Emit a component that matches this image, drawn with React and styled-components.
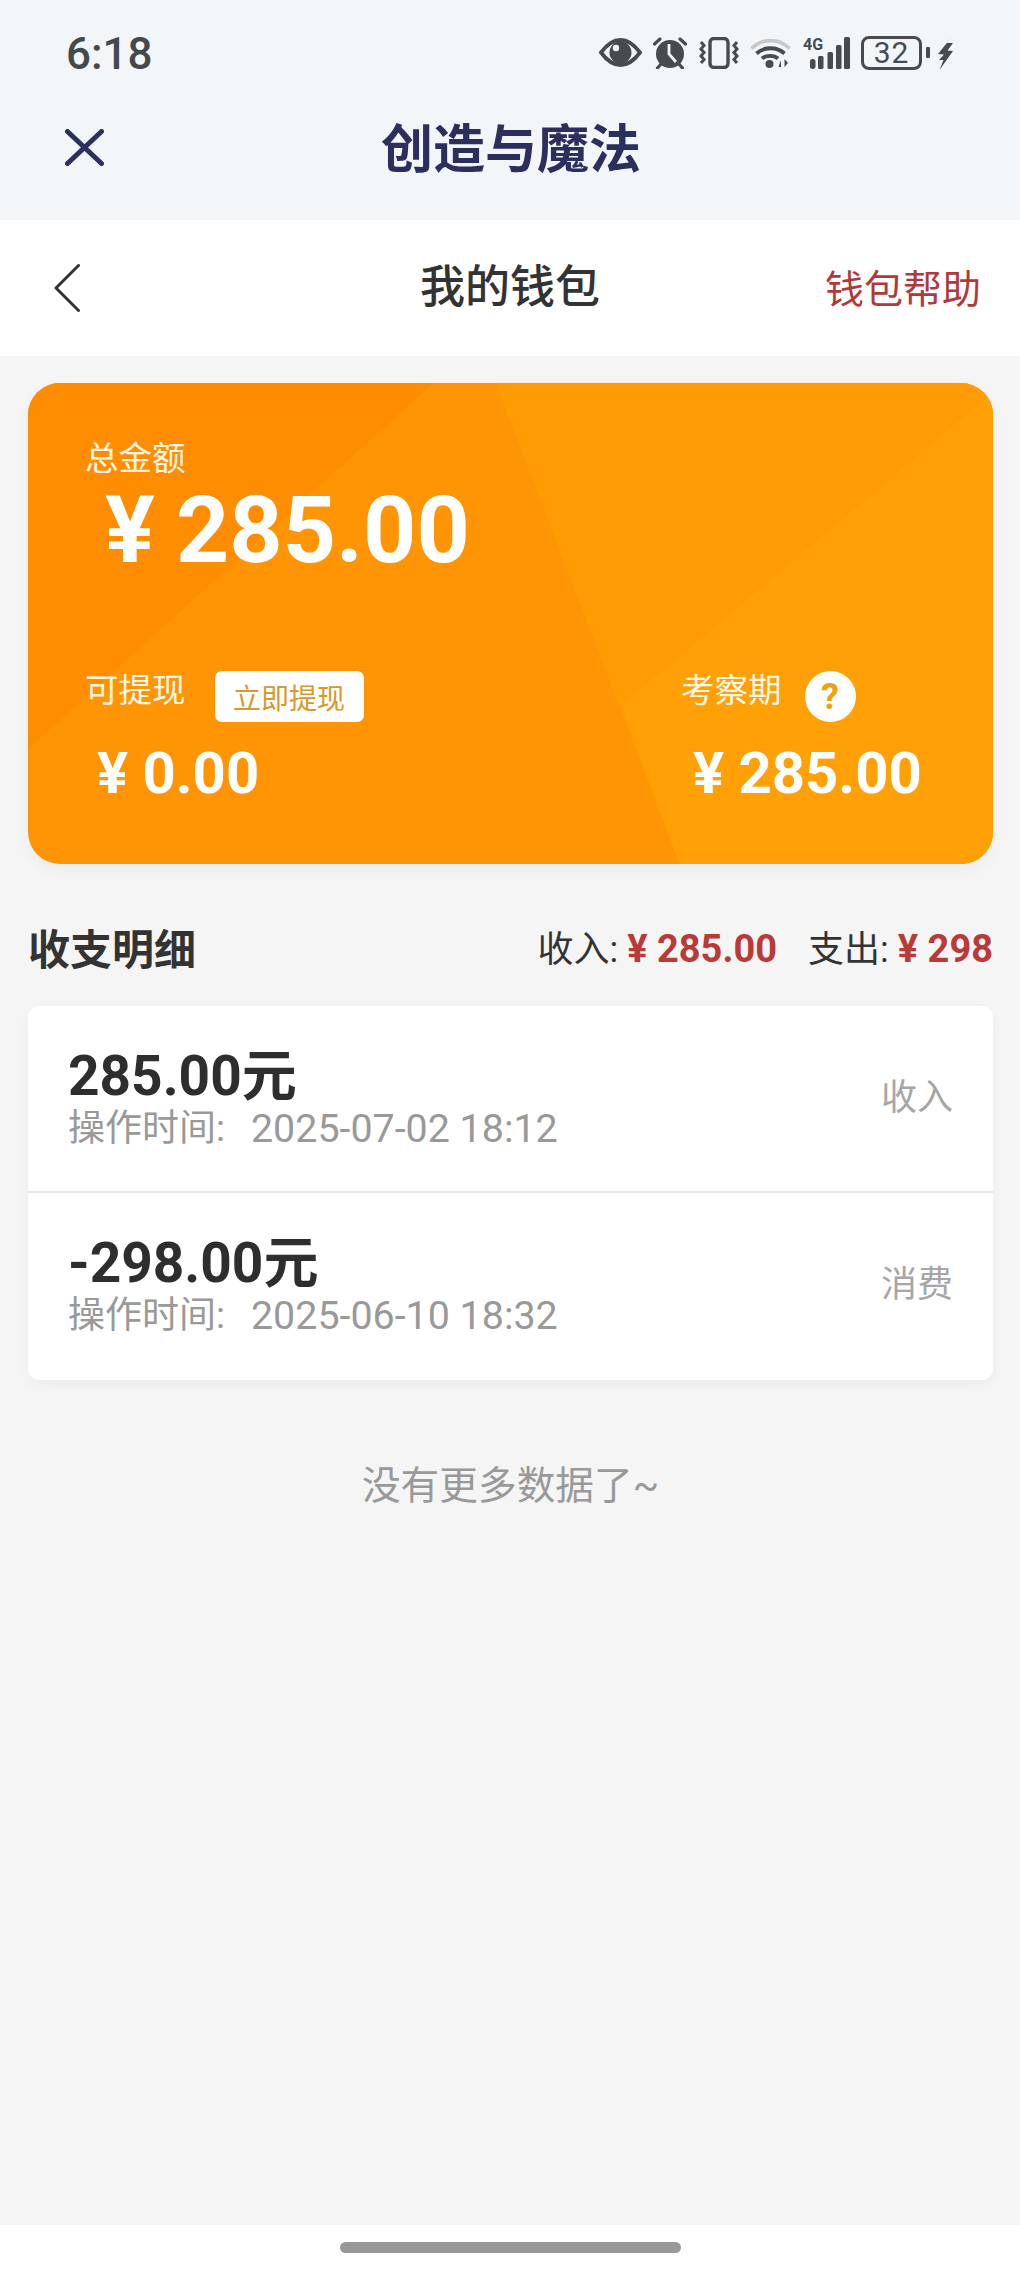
import React from 'react';
import styled, { createGlobalStyle } from 'styled-components';

const GlobalStyle = createGlobalStyle`
  html, body {
    margin: 0;
    padding: 0;
    background: #f5f5f5;
  }
  * {
    box-sizing: border-box;
  }
`;

const ICON = '#474b4e';

const Page = styled.div`
  width: 1020px;
  height: 2270px;
  display: flex;
  flex-direction: column;
  background: #f5f5f5;
  font-family: Roboto, 'Noto Sans CJK SC', sans-serif;
  overflow: hidden;
`;

const TopBar = styled.header`
  height: 220px;
  background: #f2f6f9;
  display: flex;
  flex-direction: column;
`;

const StatusBar = styled.div`
  height: 106px;
  padding: 2px 67px 0 66px;
  display: flex;
  align-items: center;
  justify-content: space-between;
`;

const Clock = styled.span`
  font-size: 44px;
  font-weight: 500;
  color: #46494c;
`;

const StatusIcons = styled.div`
  display: flex;
  align-items: center;
  gap: 11.5px;
  margin-top: -3px;
`;

const Battery = styled.div`
  width: 61px;
  height: 34px;
  border: 3px solid ${ICON};
  border-radius: 8px;
  display: flex;
  align-items: center;
  justify-content: center;
  font-size: 30px;
  line-height: 1;
  color: ${ICON};
  letter-spacing: 1px;
`;

const BatteryNub = styled.div`
  width: 4px;
  height: 11px;
  margin-left: -7.5px;
  margin-right: -3.5px;
  border-radius: 1px;
  background: ${ICON};
`;

const AppBar = styled.div`
  display: grid;
  grid-template-columns: 1fr auto 1fr;
  align-items: center;
  padding: 0 65px;
  height: 82px;
`;

const AppTitle = styled.h1`
  margin: 0 0 0 2px;
  padding-top: 8px;
  font-size: 52px;
  line-height: 60px;
  font-weight: 700;
  color: #2a2f5e;
`;

const NavBar = styled.nav`
  height: 136px;
  background: #fff;
  display: grid;
  grid-template-columns: 1fr auto 1fr;
  align-items: center;
  padding: 0 39px;
`;

const BackLink = styled.a`
  display: flex;
  margin-left: 15px;
`;

const NavTitle = styled.h2`
  margin: 0;
  font-size: 45px;
  line-height: 56px;
  font-weight: 500;
  color: #333;
`;

const HelpLink = styled.a`
  justify-self: end;
  margin-bottom: 4px;
  font-size: 39px;
  color: #b0393b;
`;

const Content = styled.main`
  flex: 1;
  padding: 27px 27px 0 28px;
  display: flex;
  flex-direction: column;
`;

const WalletCard = styled.section`
  position: relative;
  height: 481px;
  padding: 56px 57px 0;
  border-radius: 32px;
  overflow: hidden;
  background: #ff9405;
  color: #fff;
  box-shadow: 0 6px 16px rgba(0, 0, 0, 0.04);
`;

const Facet = styled.div`
  position: absolute;
  inset: 0;
  background: ${(p) => p.$color};
  clip-path: polygon(${(p) => p.$points});
`;

const CardBody = styled.div`
  position: relative;
  display: flex;
  flex-direction: column;
`;

const CardLabel = styled.span`
  font-size: 33.5px;
  line-height: 40px;
  color: #fff6e6;
`;

const TotalAmount = styled.div`
  margin: 2px 0 0 20px;
  font-size: 93px;
  line-height: 100px;
  font-weight: 700;
  word-spacing: -2px;
`;

const SplitRow = styled.div`
  margin-top: 90px;
  display: flex;
  justify-content: space-between;
`;

const SplitCol = styled.div`
  display: flex;
  flex-direction: column;
  width: ${(p) => p.$width};
`;

const SplitHead = styled.div`
  display: flex;
  align-items: flex-start;
  height: 51px;
`;

const WithdrawButton = styled.button`
  width: 149px;
  height: 51px;
  margin-left: 29px;
  padding: 0;
  border: none;
  border-radius: 7px;
  background: #fff;
  color: #d9982c;
  font-family: inherit;
  font-size: 28px;
`;

const HelpBadge = styled.span`
  width: 51px;
  height: 51px;
  margin-left: 23px;
  border-radius: 50%;
  background: #fff;
  color: #f3a010;
  display: flex;
  align-items: center;
  justify-content: center;
  font-size: 36px;
  font-weight: 700;
`;

const SplitAmount = styled.div`
  margin: 17px 0 0 ${(p) => p.$indent}px;
  font-size: 58px;
  line-height: 68px;
  font-weight: 700;
`;

const SummaryRow = styled.div`
  margin-top: 59px;
  height: 46px;
  display: flex;
  align-items: center;
  justify-content: space-between;
`;

const SectionTitle = styled.h3`
  margin: 0;
  font-size: 42px;
  font-weight: 700;
  color: #333;
`;

const Totals = styled.div`
  display: flex;
  align-items: center;
  gap: 31px;
`;

const TotalItem = styled.span`
  font-size: 36px;
  color: #333;
`;

const TotalValue = styled.b`
  margin-left: 9px;
  font-size: 38px;
  font-weight: 700;
  color: #b93a36;
`;

const ListCard = styled.section`
  margin-top: 37px;
  background: #fff;
  border-radius: 11px;
  box-shadow: 0 5px 12px rgba(0, 0, 0, 0.04);
`;

const Row = styled.div`
  height: 187px;
  padding: 40px 40px 0 40px;
  display: flex;
  justify-content: space-between;
  border-bottom: ${(p) => (p.$divider ? '2px solid #e6e6e6' : 'none')};
`;

const RowMain = styled.div`
  display: flex;
  flex-direction: column;
`;

const RowAmount = styled.div`
  font-size: 55px;
  line-height: 60px;
  font-weight: 700;
  color: #2e2e2e;
`;

const RowTime = styled.div`
  margin-top: 3px;
  display: flex;
  font-size: 37px;
  line-height: 40px;
  color: #999;
`;

const RowTimeValue = styled.span`
  margin-left: 26px;
  font-size: 39.4px;
`;

const RowKind = styled.span`
  margin-top: 29px;
  font-size: 36px;
  line-height: 46px;
  color: #a6a6a6;
`;

const EndNote = styled.p`
  margin: 81px 0 0;
  text-align: center;
  font-size: 38.7px;
  line-height: 50px;
  color: #999;
`;

const HomeBar = styled.footer`
  height: 45px;
  background: #fff;
  display: flex;
  justify-content: center;
  padding-top: 17px;
`;

const HomePill = styled.div`
  width: 341px;
  height: 11px;
  border-radius: 6px;
  background: #989898;
`;

const EyeIcon = () => (
  <svg width="43" height="29" viewBox="0 0 43 29" fill="none">
    <path
      d="M2 14.5C9 5 15 2 21.5 2S34 5 41 14.5C34 24 28 27 21.5 27S9 24 2 14.5Z"
      stroke={ICON}
      strokeWidth="3.8"
    />
    <circle cx="21.5" cy="14.5" r="11" fill={ICON} />
    <circle cx="17" cy="10" r="3.2" fill="#f2f6f9" />
  </svg>
);

const AlarmIcon = () => (
  <svg width="34" height="32" viewBox="0 0 34 32" fill="none">
    <circle cx="17" cy="17" r="14" fill={ICON} />
    <path d="M16 7V17L23 25" stroke="#f2f6f9" strokeWidth="2.8" />
    <path
      d="M1.5 7L7 2M32.5 7L27 2M4.5 31L9 26M29.5 31L25 26"
      stroke={ICON}
      strokeWidth="3.2"
      strokeLinecap="round"
    />
  </svg>
);

const VibrateIcon = () => (
  <svg width="40" height="32" viewBox="0 0 40 32" fill="none">
    <rect x="11" y="1.5" width="18" height="29" rx="4" stroke={ICON} strokeWidth="3.4" />
    <path
      d="M2 5L5 8.5L2 12L5 15.5L2 19L5 22.5L2 26M38 5L35 8.5L38 12L35 15.5L38 19L35 22.5L38 26"
      stroke={ICON}
      strokeWidth="3"
    />
  </svg>
);

const WifiIcon = () => (
  <svg width="41" height="31" viewBox="0 0 41 31" fill="none">
    <path d="M1.5 11.5C12 1 29 1 39.5 11.5" stroke="#c6c8ca" strokeWidth="3.6" />
    <path d="M6.5 16.5C14 9.5 27 9.5 34.5 16.5" stroke={ICON} strokeWidth="3.8" />
    <path d="M12 21.5C16 18 24 18 28 21.5" stroke={ICON} strokeWidth="3.8" />
    <circle cx="19.5" cy="27" r="4" fill={ICON} />
    <path d="M31 23V30H28.5ZM34.5 22V30L38 26Z" fill={ICON} />
  </svg>
);

const SignalIcon = () => (
  <svg width="47" height="34" viewBox="0 0 47 34">
    <text x="0" y="14" fontSize="16" fontWeight="700" fontFamily="Roboto, sans-serif" fill={ICON}>
      4G
    </text>
    <rect x="7" y="23" width="5.5" height="10" rx="2.7" fill={ICON} />
    <rect x="15" y="20" width="5.5" height="13" rx="1.5" fill={ICON} />
    <rect x="24.5" y="16" width="5.5" height="17" rx="1.5" fill={ICON} />
    <rect x="33" y="9" width="5.5" height="24" rx="1.5" fill={ICON} />
    <rect x="41" y="1" width="6" height="32" rx="1.5" fill={ICON} />
  </svg>
);

const BoltIcon = () => (
  <svg width="15" height="34" viewBox="0 0 15 34">
    <path d="M14.5 0L0 18L6 18.5L1 24L5.5 24L1.5 34L15 15L9.5 14.5L15 7L9 7Z" fill={ICON} />
  </svg>
);

const CloseIcon = () => (
  <svg width="39" height="37" viewBox="0 0 39 37" fill="none">
    <path d="M2.5 2.5L36.5 34.5M36.5 2.5L2.5 34.5" stroke="#2b3060" strokeWidth="5" strokeLinecap="round" />
  </svg>
);

const BackIcon = () => (
  <svg width="26" height="48" viewBox="0 0 26 48" fill="none">
    <path d="M24.5 1.5L2 24L24.5 46.5" stroke="#333" strokeWidth="3" strokeLinecap="round" strokeLinejoin="round" />
  </svg>
);

const records = [
  { amount: '285.00元', time: '2025-07-02 18:12', kind: '收入', divider: true },
  { amount: '-298.00元', time: '2025-06-10 18:32', kind: '消费', divider: false },
];

export default function App() {
  return (
    <Page>
      <GlobalStyle />
      <TopBar>
        <StatusBar>
          <Clock>6:18</Clock>
          <StatusIcons>
            <EyeIcon />
            <AlarmIcon />
            <VibrateIcon />
            <WifiIcon />
            <SignalIcon />
            <Battery>32</Battery>
            <BatteryNub />
            <BoltIcon />
          </StatusIcons>
        </StatusBar>
        <AppBar>
          <CloseIcon />
          <AppTitle>创造与魔法</AppTitle>
        </AppBar>
      </TopBar>

      <NavBar>
        <BackLink>
          <BackIcon />
        </BackLink>
        <NavTitle>我的钱包</NavTitle>
        <HelpLink>钱包帮助</HelpLink>
      </NavBar>

      <Content>
        <WalletCard>
          <Facet $color="#ff8d02" $points="0 0, 42% 0, 0 76%" />
          <Facet $color="#ff9c05" $points="48.5% 0, 100% 0, 100% 100%, 67.5% 100%" />
          <Facet $color="#ffa006" $points="100% 2%, 100% 100%, 67.5% 100%, 61.5% 67%" />
          <CardBody>
            <CardLabel>总金额</CardLabel>
            <TotalAmount>¥ 285.00</TotalAmount>
            <SplitRow>
              <SplitCol $width="auto">
                <SplitHead>
                  <CardLabel>可提现</CardLabel>
                  <WithdrawButton>立即提现</WithdrawButton>
                </SplitHead>
                <SplitAmount $indent={12}>¥ 0.00</SplitAmount>
              </SplitCol>
              <SplitCol $width="255px">
                <SplitHead>
                  <CardLabel>考察期</CardLabel>
                  <HelpBadge>?</HelpBadge>
                </SplitHead>
                <SplitAmount $indent={12}>¥ 285.00</SplitAmount>
              </SplitCol>
            </SplitRow>
          </CardBody>
        </WalletCard>

        <SummaryRow>
          <SectionTitle>收支明细</SectionTitle>
          <Totals>
            <TotalItem>
              收入:<TotalValue>¥ 285.00</TotalValue>
            </TotalItem>
            <TotalItem>
              支出:<TotalValue>¥ 298</TotalValue>
            </TotalItem>
          </Totals>
        </SummaryRow>

        <ListCard>
          {records.map((r) => (
            <Row key={r.time} $divider={r.divider}>
              <RowMain>
                <RowAmount>{r.amount}</RowAmount>
                <RowTime>
                  操作时间:
                  <RowTimeValue>{r.time}</RowTimeValue>
                </RowTime>
              </RowMain>
              <RowKind>{r.kind}</RowKind>
            </Row>
          ))}
        </ListCard>

        <EndNote>没有更多数据了~</EndNote>
      </Content>

      <HomeBar>
        <HomePill />
      </HomeBar>
    </Page>
  );
}
